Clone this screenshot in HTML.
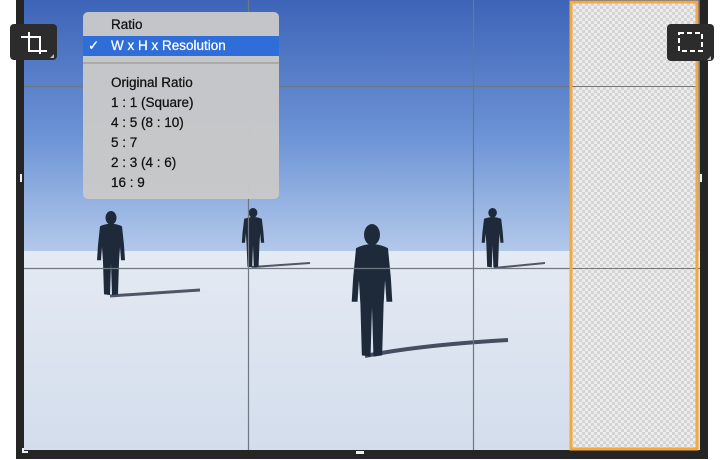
<!DOCTYPE html>
<html><head><meta charset="utf-8"><style>
body{margin:0;width:720px;height:460px;background:#fff;position:relative;overflow:hidden;font-family:"Liberation Sans",sans-serif}
.menu{position:absolute;left:83px;top:12px;width:196px;height:187px;background:rgba(200,200,200,0.97);border-radius:5px;font-size:13.5px;color:#111;-webkit-text-stroke:0.25px #111}
.menu div{position:absolute;left:28px}
.btn{position:absolute;background:#2c2c2c;border-radius:4px}
</style></head><body>
<div style="position:absolute;left:16px;top:0;width:692px;height:459px;background:#252525"></div>
<svg style="position:absolute;left:0;top:0" width="720" height="460">
<defs>
<linearGradient id="sky" x1="0" y1="0" x2="0" y2="1"><stop offset="0" stop-color="#3d64b7"/><stop offset="0.55" stop-color="#6d94d6"/><stop offset="1" stop-color="#b3c9ea"/></linearGradient>
<linearGradient id="snow" x1="0" y1="0" x2="0" y2="1"><stop offset="0" stop-color="#e4eaf3"/><stop offset="1" stop-color="#d3ddec"/></linearGradient>
<pattern id="chk" width="6" height="6" patternUnits="userSpaceOnUse"><rect width="6" height="6" fill="#ececec"/><rect width="3" height="3" fill="#d4d4d4"/><rect x="3" y="3" width="3" height="3" fill="#d4d4d4"/></pattern>
<g id="fig" fill="#1e2a3a"><ellipse cx="20" cy="8" rx="5.5" ry="8"/><path d="M9 18 Q20 12 31 18 L33 40 L34 58 L30 58 L29 42 L28 60 L27 98 L21 99 L20 62 L19 99 L13 98 L12 60 L11 42 L10 58 L6 58 L7 40 Z"/></g>
</defs>
<rect x="24" y="0" width="676" height="251" fill="url(#sky)"/>
<rect x="24" y="251" width="676" height="199" fill="url(#snow)"/>
<path d="M110 296 L200 290" stroke="#2a3344" stroke-width="3" opacity=".8"/>
<path d="M252 267 L310 263" stroke="#2a3344" stroke-width="2" opacity=".8"/>
<path d="M494 268 L545 263" stroke="#2a3344" stroke-width="2" opacity=".8"/>
<path d="M365 356 Q420 345 508 340" stroke="#2a3344" stroke-width="4" fill="none" opacity=".85"/>
<use href="#fig" transform="translate(91,211) scale(1.0,0.85)"/>
<use href="#fig" transform="translate(237,208) scale(0.8,0.6)"/>
<use href="#fig" transform="translate(477,208) scale(0.78,0.6)"/>
<use href="#fig" transform="translate(343,224) scale(1.45,1.34)"/>
<g stroke="#6f7780" stroke-width="1.2"><line x1="248.5" y1="0" x2="248.5" y2="450"/><line x1="473.5" y1="0" x2="473.5" y2="450"/><line x1="24" y1="86.5" x2="700" y2="86.5"/><line x1="24" y1="268.5" x2="700" y2="268.5"/></g>
<rect x="571" y="2" width="126" height="447" fill="url(#chk)"/>
<line x1="571" y1="86.5" x2="697" y2="86.5" stroke="#777"/><line x1="571" y1="268.5" x2="697" y2="268.5" stroke="#777"/>
<rect x="571" y="2" width="126" height="447" fill="none" stroke="#f6a83a" stroke-width="3"/>
<g fill="#eee"><rect x="22" y="448" width="2" height="5"/><rect x="22" y="451" width="6" height="2"/><rect x="356" y="451" width="8" height="3"/><rect x="20" y="174" width="2" height="8"/><rect x="700" y="174" width="2" height="8"/></g>
</svg>
<div class="btn" style="left:10px;top:24px;width:47px;height:36px"></div>
<svg style="position:absolute;left:10px;top:24px" width="47" height="36"><path d="M11 13 H30 V30 M19 8 V27 H37" stroke="#fff" stroke-width="2" fill="none"/><path d="M44 30 L44 34 L40 34 Z" fill="#bbb"/></svg>
<div class="btn" style="left:667px;top:24px;width:47px;height:37px"></div>
<svg style="position:absolute;left:667px;top:24px" width="47" height="37"><rect x="12" y="9" width="23" height="18" fill="none" stroke="#fff" stroke-width="2" stroke-dasharray="5 3"/><path d="M44 32 L44 36 L40 36 Z" fill="#bbb"/></svg>
<div class="menu">
<div style="top:5px">Ratio</div>
<div style="left:0;top:24px;width:196px;height:20px;background:#2f6dd9"></div>
<div style="left:5px;top:26px;color:#fff;-webkit-text-stroke:0.25px #fff">✓</div>
<div style="top:26px;color:#fff;-webkit-text-stroke:0.25px #fff">W x H x Resolution</div>
<div style="left:0;top:50px;width:196px;height:2px;background:#aaa"></div>
<div style="top:63px">Original Ratio</div>
<div style="top:83px">1 : 1 (Square)</div>
<div style="top:103px">4 : 5 (8 : 10)</div>
<div style="top:123px">5 : 7</div>
<div style="top:143px">2 : 3 (4 : 6)</div>
<div style="top:163px">16 : 9</div>
</div>
</body></html>
